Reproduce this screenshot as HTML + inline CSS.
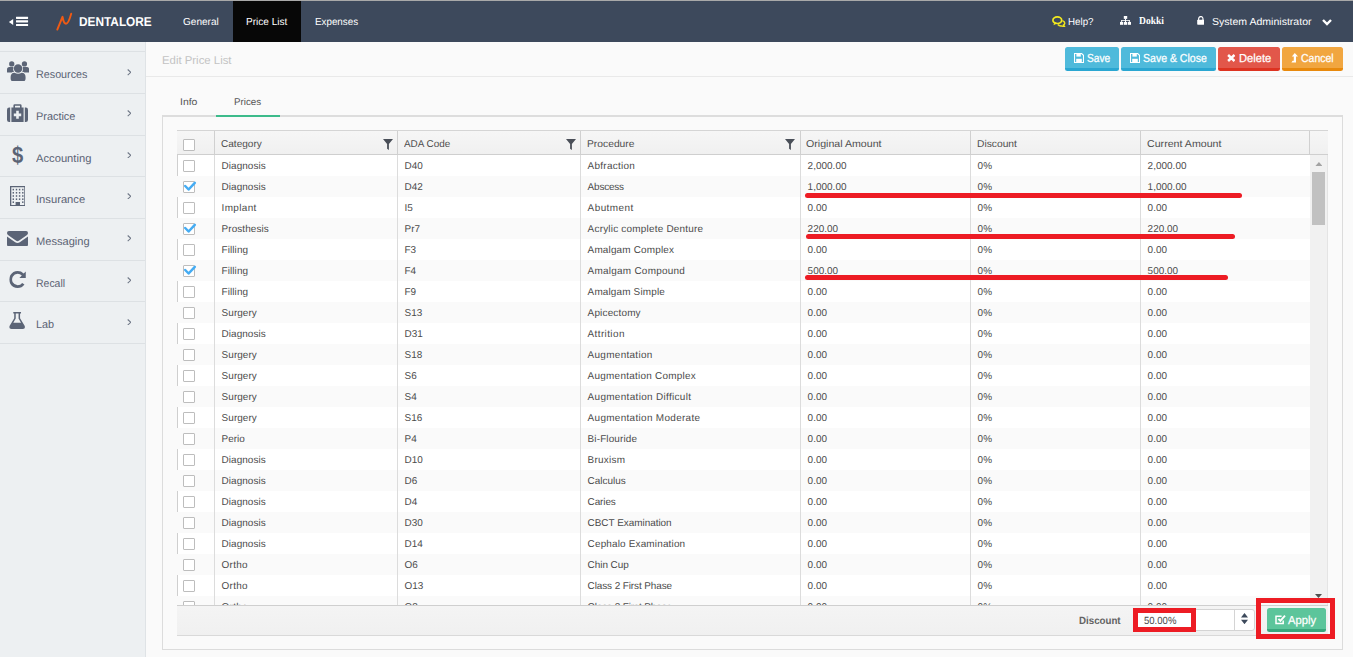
<!DOCTYPE html>
<html><head><meta charset="utf-8"><title>Edit Price List</title>
<style>
*{box-sizing:border-box;margin:0;padding:0}
html,body{width:1353px;height:657px;overflow:hidden;background:#fafafa;font-family:"Liberation Sans",sans-serif;color:#4f4f4f;text-rendering:geometricPrecision}
body{position:relative}
.abs{position:absolute}
.fx{position:absolute;white-space:nowrap;transform-origin:0 50%;display:block}
#topline{left:0;top:0;width:1353px;height:1px;background:#a9a9a9}
#nav{left:0;top:1px;width:1353px;height:41px;background:#3d495c}
#nav .fx{color:#fff;font-size:10.2px;top:15.1px;line-height:13px}
#nav .act{position:absolute;left:233px;top:0;width:68px;height:41px;background:#070707}
#side{left:0;top:42px;width:146px;height:615px;background:#edf0f2;border-right:1px solid #dfe3e6}
#side .sep{position:absolute;left:0;width:145px;height:1px;background:#dde1e4}
#side .fx{left:35.9px;font-size:11px;color:#5b6374;line-height:14px}
#side .chev{position:absolute;left:126.6px;width:4.6px;height:6.6px}
#side .ic{position:absolute;fill:#5b6476}
#titlebar{left:146px;top:42px;width:1207px;height:35px;background:#fafafa;border-bottom:1px solid #e9e9e9}
#title{left:162px;top:54.3px;font-size:11.4px;color:#c3c3c3;line-height:15px}
.btn{position:absolute;top:47px;height:23.7px;border-radius:2.5px;color:#fff;font-size:11.6px;line-height:21px;white-space:nowrap;-webkit-text-stroke:0.25px #fff}
.btn svg{position:absolute}
.btn .fx{top:0.6px}
.tab{font-size:9.7px;color:#555;line-height:13px;top:96.2px}
#panel{left:162px;top:115px;width:1181px;height:535px;border:1px solid #dcdcdc;border-top:2px solid #dddddd;background:#fafafa}
#tabline{left:216px;top:115px;width:64px;height:2px;background:#3dbb8b}
#ghead{left:177px;top:130px;width:1151px;height:25px;border-top:1px solid #d5d5d5;border-bottom:1px solid #cfcfcf;background:linear-gradient(#f6f6f6,#f0f0f0)}
#ghead .fx{top:7.3px;font-size:9.95px;color:#4f4f4f;line-height:13px}
#ghead .d{position:absolute;top:0;width:1px;height:23px;background:#d0d0d0}
#ghead .f{position:absolute;top:8px;width:10px;height:11px;fill:#4a4f58}
#gbody{left:177px;top:155px;width:1133px;height:450px;overflow:hidden;background:#fff}
.r{position:absolute;left:0;width:1133px;border-left:1px solid #cfcfcf;height:21px;font-size:9.95px;letter-spacing:0.2px;line-height:21px;color:#4b4b4b;background:#fff}
.r.alt{background:#fafafa;border-left-color:#fafafa}


.r span{position:absolute;top:1px;white-space:nowrap}
.c4,.c5,.c6{letter-spacing:0.03px}
.c2{letter-spacing:-0.05px}
.c1{left:43.6px}.c2{left:226.6px}.c3{left:409.6px}.c4{left:629.6px}.c5{left:799.6px}.c6{left:969.6px}
.cb{position:absolute;left:5px;top:5px;width:12px;height:12px;border:1px solid #bdbdbd;background:#fff;border-radius:1px}
.cb svg{position:absolute;left:-1px;top:-1px;width:14px;height:14px;overflow:visible}
.cb svg path{fill:none;stroke:#45acf3;stroke-width:2.5;stroke-linecap:round;stroke-linejoin:round}
.vl{position:absolute;top:155px;width:1px;height:450px;background:#dcdcdc}
#scroll{left:1310px;top:155px;width:18px;height:450px;background:#f1f1f1;border-right:1px solid #e4e4e4}
#thumb{left:1312px;top:172px;width:13px;height:53px;background:#c1c1c1}
#gfoot{left:177px;top:605px;width:1151px;height:31px;background:linear-gradient(#f4f4f4,#f0f0f0);border-top:1px solid #cfcfcf;border-bottom:1px solid #d9d9d9}
#dlabel{left:1079px;top:615px;font-size:10.4px;font-weight:bold;color:#626262;line-height:13px}
#dinput{left:1135px;top:609px;width:119.5px;height:22px;background:#fff;border:1px solid #d4d4d4;border-radius:3px}
#dinput .fx{left:8.3px;top:5px;font-size:10.4px;line-height:13px;color:#484848}
#dinput .sp{position:absolute;left:98px;top:0;width:1px;height:21px;background:#d4d4d4}
.red{position:absolute;background:#ed1c24;height:4.5px;border-radius:2.5px}
.rbox{position:absolute;border:5px solid #ed1c24}
#apply{left:1267px;top:608px;width:59px;height:23.8px;background:linear-gradient(#5cc59b 0,#5cc59b 20.9px,#39a67c 20.9px);border-radius:2.5px;color:#fff;font-size:11.6px;line-height:22px;-webkit-text-stroke:0.25px #fff}
</style></head><body>
<div id="topline" class="abs"></div>

<div id="nav" class="abs">
  <svg class="abs" style="left:8px;top:14px" width="21" height="13" viewBox="0 0 21 13"><path d="M0.9 6.9 L5.2 3.9 V9.9 Z" fill="#fff"/><rect x="8" y="1.7" width="12.1" height="2.2" rx="0.4" fill="#fff"/><rect x="8" y="5.2" width="12.1" height="2.2" rx="0.4" fill="#fff"/><rect x="8" y="8.9" width="12.1" height="2.2" rx="0.4" fill="#fff"/></svg>
  <svg class="abs" style="left:55px;top:11px" width="18" height="20" viewBox="0 0 18 20"><path d="M2.3 17.6 L7.5 4.8 C8.1 7.2 8.4 11.7 11 11.7 C13.5 11.7 14.9 6.4 16.2 1.8" fill="none" stroke="#ef5a14" stroke-width="1.95" stroke-linecap="round" stroke-linejoin="round"/></svg>
  <span id="brand" class="fx" style="left:79.3px;top:12.5px;font-size:12.9px;font-weight:bold;line-height:16px;transform:scaleX(0.918)">DENTALORE</span>
  <div class="act"></div>
  <span id="n1" class="fx" style="left:183.4px;transform:scaleX(0.985)">General</span>
  <span id="n2" class="fx" style="left:246.4px;transform:scaleX(0.986)">Price List</span>
  <span id="n3" class="fx" style="left:314.7px;transform:scaleX(0.963)">Expenses</span>
  <svg class="abs" style="left:1052px;top:15px" width="14" height="11.4" viewBox="0 0 14 11.4"><path d="M10.4 4.6 Q12.9 5.4 12.7 7.3 Q12.5 8.5 11.6 9 L12.6 10.8 L9.6 9.9 Q7.2 10.2 5.8 8.6" fill="none" stroke="#efe61c" stroke-width="1.5"/><ellipse cx="5.3" cy="4.2" rx="4.4" ry="3.3" fill="#3d495c" stroke="#f3ea1f" stroke-width="1.7"/><path d="M2.4 6.6 L1.4 9.2 L5.2 7.6Z" fill="#f3ea1f"/></svg>
  <span id="n4" class="fx" style="left:1068.2px;transform:scaleX(0.958)">Help?</span>
  <svg class="abs" style="left:1120px;top:15px" width="11" height="9" viewBox="0 0 11 10" preserveAspectRatio="none"><g fill="#fff"><rect x="3.8" y="0" width="3.4" height="3.2"/><rect x="0" y="6.6" width="3.2" height="3.2"/><rect x="3.9" y="6.6" width="3.2" height="3.2"/><rect x="7.8" y="6.6" width="3.2" height="3.2"/><rect x="5" y="3" width="1" height="4"/><rect x="1.2" y="4.6" width="8.6" height="0.9"/><rect x="1.2" y="4.6" width="0.9" height="2.2"/><rect x="8.9" y="4.6" width="0.9" height="2.2"/></g></svg>
  <span id="n5" class="fx" style="left:1139.1px;top:13.7px;font-family:'Liberation Serif',serif;font-weight:bold;font-size:10.6px;transform:scaleX(0.899)">Dokki</span>
  <svg class="abs" style="left:1196.8px;top:15px" width="7.6" height="9" viewBox="0 0 8 10"><path d="M1.6 4.4 V3 a2.4 2.4 0 0 1 4.8 0 V4.4" fill="none" stroke="#fff" stroke-width="1.3"/><rect x="0" y="4.2" width="8" height="5.4" rx="0.7" fill="#fff"/></svg>
  <span id="n6" class="fx" style="left:1212.3px;transform:scaleX(1.034)">System Administrator</span>
  <svg class="abs" style="left:1321.5px;top:17.5px" width="10" height="7" viewBox="0 0 10 7"><path d="M1 1 L5 5 L9 1" fill="none" stroke="#fff" stroke-width="2.4"/></svg>
</div>
<div id="side" class="abs">
<div class="sep" style="top:9px"></div>
<svg class="ic" style="left:6.7px;top:18.7px" width="22.2" height="20.6" viewBox="0 0 22 20"><circle cx="4.7" cy="2.7" r="2.6"/><circle cx="17.3" cy="2.7" r="2.6"/><circle cx="11" cy="7.2" r="4.2"/><path d="M0 10.6 V8.4 Q0 5.8 2.4 5.8 H6.4 Q5.6 8.6 7 10.4 Q5.2 10.6 4.6 11.2 H0.6 Q0 11.2 0 10.6Z"/><path d="M22 10.6 V8.4 Q22 5.8 19.6 5.8 H15.6 Q16.4 8.6 15 10.4 Q16.8 10.6 17.4 11.2 H21.4 Q22 11.2 22 10.6Z"/><path d="M3.6 17.4 V15.6 Q3.6 11.6 7.4 11.4 Q11 13.6 14.6 11.4 Q18.4 11.6 18.4 15.6 V17.4 Q18.4 20 15.8 20 H6.2 Q3.6 20 3.6 17.4Z"/></svg>
<span id="s0" class="fx" style="top:26px;transform:scaleX(0.978)">Resources</span>
<svg class="chev" style="top:27.3px" viewBox="0 0 4.6 6.6"><path d="M0.7 0.5 L3.8 3.3 L0.7 6.1" fill="none" stroke="#6f7787" stroke-width="1.05"/></svg>
<div class="sep" style="top:51px"></div>
<svg class="ic" style="left:7px;top:61.8px" width="21" height="18" viewBox="0 0 21 18"><path d="M0 5.8 Q0 3.6 2.2 3.6 H3.2 V18 H2.2 Q0 18 0 15.8Z"/><path d="M21 5.8 Q21 3.6 18.8 3.6 H17.8 V18 H18.8 Q21 18 21 15.8Z"/><path fill-rule="evenodd" d="M4.4 3.6 H6.4 V1.6 Q6.4 0.2 7.8 0.2 H13.2 Q14.6 0.2 14.6 1.6 V3.6 H16.6 V18 H4.4Z M8 1.8 V3.6 H13 V1.8Z M9.2 6.8 V9.4 H6.8 V12.2 H9.2 V14.8 H11.8 V12.2 H14.2 V9.4 H11.8 V6.8Z"/></svg>
<span id="s1" class="fx" style="top:68px;transform:scaleX(0.991)">Practice</span>
<svg class="chev" style="top:68.1px" viewBox="0 0 4.6 6.6"><path d="M0.7 0.5 L3.8 3.3 L0.7 6.1" fill="none" stroke="#6f7787" stroke-width="1.05"/></svg>
<div class="sep" style="top:93px"></div>
<div style="position:absolute;left:11.6px;top:100.6px;font-size:23.5px;line-height:24px;color:#5b6476;font-weight:bold;transform:scaleX(0.86);transform-origin:0 0">$</div>
<span id="s2" class="fx" style="top:110px;transform:scaleX(1.018)">Accounting</span>
<svg class="chev" style="top:109.8px" viewBox="0 0 4.6 6.6"><path d="M0.7 0.5 L3.8 3.3 L0.7 6.1" fill="none" stroke="#6f7787" stroke-width="1.05"/></svg>
<div class="sep" style="top:134px"></div>
<svg class="ic" style="left:9.6px;top:143.9px" width="15.6" height="20.2" viewBox="0 0 15.6 20.2"><path fill-rule="evenodd" d="M0 0 H15.6 V20.2 H0Z M1.3 1.3 V18.9 H5.6 V16 H10 V18.9 H14.3 V1.3Z"/><g><rect x="2.6" y="2.8" width="1.4" height="1.6"/><rect x="5.8" y="2.8" width="1.4" height="1.6"/><rect x="8.9" y="2.8" width="1.4" height="1.6"/><rect x="12.1" y="2.8" width="1.4" height="1.6"/><rect x="2.6" y="6.0" width="1.4" height="1.6"/><rect x="5.8" y="6.0" width="1.4" height="1.6"/><rect x="8.9" y="6.0" width="1.4" height="1.6"/><rect x="12.1" y="6.0" width="1.4" height="1.6"/><rect x="2.6" y="9.2" width="1.4" height="1.6"/><rect x="5.8" y="9.2" width="1.4" height="1.6"/><rect x="8.9" y="9.2" width="1.4" height="1.6"/><rect x="12.1" y="9.2" width="1.4" height="1.6"/><rect x="2.6" y="12.4" width="1.4" height="1.6"/><rect x="5.8" y="12.4" width="1.4" height="1.6"/><rect x="8.9" y="12.4" width="1.4" height="1.6"/><rect x="12.1" y="12.4" width="1.4" height="1.6"/><rect x="2.6" y="15.4" width="1.4" height="1.6"/><rect x="12.1" y="15.4" width="1.4" height="1.6"/></g></svg>
<span id="s3" class="fx" style="top:151px;transform:scaleX(1.018)">Insurance</span>
<svg class="chev" style="top:150.6px" viewBox="0 0 4.6 6.6"><path d="M0.7 0.5 L3.8 3.3 L0.7 6.1" fill="none" stroke="#6f7787" stroke-width="1.05"/></svg>
<div class="sep" style="top:176px"></div>
<svg class="ic" style="left:7.3px;top:188.9px" width="21" height="15.5" viewBox="0 0 22 16"><path d="M0 2 Q0 0 2 0 H20 Q22 0 22 2 Q22 3.4 20.6 4.4 L12.4 10 Q11 11 9.6 10 L1.4 4.4 Q0 3.4 0 2Z"/><path d="M0 5.6 L8.6 11.6 Q11 13.2 13.4 11.6 L22 5.6 V14 Q22 16 20 16 H2 Q0 16 0 14Z"/></svg>
<span id="s4" class="fx" style="top:193px;transform:scaleX(1.007)">Messaging</span>
<svg class="chev" style="top:193.2px" viewBox="0 0 4.6 6.6"><path d="M0.7 0.5 L3.8 3.3 L0.7 6.1" fill="none" stroke="#6f7787" stroke-width="1.05"/></svg>
<div class="sep" style="top:218px"></div>
<svg class="ic" style="left:9px;top:229.4px" width="17.3" height="17" viewBox="0 0 18 18"><path d="M17.6 0.6 V7.4 H10.8 L13.4 4.8 Q11.6 3 9 3 Q5.6 3 3.8 6 Q2.4 9 3.8 12 Q5.6 15 9 15 Q12 15 13.8 12.6 L16.2 14.2 Q13.6 18 9 18 Q4 18 1.2 13.4 Q-0.6 9 1.2 4.6 Q4 0 9 0 Q12.8 0 15.4 2.6Z"/></svg>
<span id="s5" class="fx" style="top:235px;transform:scaleX(0.952)">Recall</span>
<svg class="chev" style="top:235.0px" viewBox="0 0 4.6 6.6"><path d="M0.7 0.5 L3.8 3.3 L0.7 6.1" fill="none" stroke="#6f7787" stroke-width="1.05"/></svg>
<div class="sep" style="top:259px"></div>
<svg class="ic" style="left:9.2px;top:270.4px" width="16.3" height="17" viewBox="0 0 17 18"><path fill-rule="evenodd" d="M4.4 0 H12.6 V1.6 H11.6 V6.6 L16.4 14.6 Q17.6 18 14.6 18 H2.4 Q-0.6 18 0.6 14.6 L5.4 6.6 V1.6 H4.4Z M7 1.6 V7 L4.4 11.4 H12.6 L10 7 V1.6Z"/></svg>
<span id="s6" class="fx" style="top:276px;transform:scaleX(0.986)">Lab</span>
<svg class="chev" style="top:276.9px" viewBox="0 0 4.6 6.6"><path d="M0.7 0.5 L3.8 3.3 L0.7 6.1" fill="none" stroke="#6f7787" stroke-width="1.05"/></svg>
<div class="sep" style="top:301px"></div>

</div>
<div id="titlebar" class="abs"></div>
<span id="title" class="fx" style="transform:scaleX(0.998)">Edit Price List</span>
<div class="btn" style="left:1065px;width:54px;background:linear-gradient(#4fbadb 0,#4fbadb 21px,#2aa6d1 21px)"><svg style="left:8.9px;top:6px" width="10" height="10" viewBox="0 0 10 10"><path d="M0.5 0.5 H7.6 L9.5 2.4 V9.5 H0.5 Z" fill="none" stroke="#fff" stroke-width="1.1"/><rect x="2.4" y="0.8" width="4.4" height="2.8" fill="#fff"/><rect x="2.2" y="5.8" width="5.6" height="3.4" fill="#fff"/></svg><span id="b1" class="fx" style="left:21.6px;transform:scaleX(0.878)">Save</span></div>
<div class="btn" style="left:1121px;width:95px;background:linear-gradient(#4fbadb 0,#4fbadb 21px,#2aa6d1 21px)"><svg style="left:8.9px;top:6px" width="10" height="10" viewBox="0 0 10 10"><path d="M0.5 0.5 H7.6 L9.5 2.4 V9.5 H0.5 Z" fill="none" stroke="#fff" stroke-width="1.1"/><rect x="2.4" y="0.8" width="4.4" height="2.8" fill="#fff"/><rect x="2.2" y="5.8" width="5.6" height="3.4" fill="#fff"/></svg><span id="b2" class="fx" style="left:21.7px;transform:scaleX(0.908)">Save &amp; Close</span></div>
<div class="btn" style="left:1218px;width:62px;background:linear-gradient(#e2574a 0,#e2574a 20.8px,#dd3321 20.8px)"><svg style="left:8.6px;top:7.2px" width="8.6" height="8" viewBox="0 0 8.6 8"><path d="M1.1 1 L7.5 7 M7.5 1 L1.1 7" stroke="#fff" stroke-width="2.5" fill="none"/></svg><span id="b3" class="fx" style="left:20.5px;transform:scaleX(0.961)">Delete</span></div>
<div class="btn" style="left:1282px;width:61px;background:linear-gradient(#f1a640 0,#f1a640 20.8px,#e8890c 20.8px)"><svg style="left:9px;top:5.5px" width="7" height="10" viewBox="0 0 7 10"><path d="M3.8 0 L7 3.6 H5 V9.4 H0.4 L1.6 7.8 H2.8 V3.6 H0.8 Z" fill="#fff"/></svg><span id="b4" class="fx" style="left:18.7px;transform:scaleX(0.903)">Cancel</span></div>
<span id="t1" class="fx tab" style="left:180.2px;transform:scaleX(1.076)">Info</span>
<span id="t2" class="fx tab" style="left:234.1px;transform:scaleX(1.010)">Prices</span>
<div id="panel" class="abs"></div>
<div id="tabline" class="abs"></div>
<div id="ghead" class="abs">
  <i class="cb" style="left:6px;top:8px;width:12px;height:12px"></i>
  <div class="d" style="left:37px"></div><span id="h1" class="fx" style="left:44.2px;transform:scaleX(1.012)">Category</span>
  <svg class="f" style="left:206px" viewBox="0 0 10 11"><path d="M0 0 H10 L5.9 4.9 V11 L4.1 9.7 V4.9 Z"/></svg>
  <div class="d" style="left:220px"></div><span id="h2" class="fx" style="left:227.3px;transform:scaleX(0.998)">ADA Code</span>
  <svg class="f" style="left:389px" viewBox="0 0 10 11"><path d="M0 0 H10 L5.9 4.9 V11 L4.1 9.7 V4.9 Z"/></svg>
  <div class="d" style="left:403px"></div><span id="h3" class="fx" style="left:410.2px;transform:scaleX(1.036)">Procedure</span>
  <svg class="f" style="left:608px" viewBox="0 0 10 11"><path d="M0 0 H10 L5.9 4.9 V11 L4.1 9.7 V4.9 Z"/></svg>
  <div class="d" style="left:623px"></div><span id="h4" class="fx" style="left:629.3px;transform:scaleX(1.068)">Original Amount</span>
  <div class="d" style="left:793px"></div><span id="h5" class="fx" style="left:799.6px;transform:scaleX(1.032)">Discount</span>
  <div class="d" style="left:963px"></div><span id="h6" class="fx" style="left:969.6px;transform:scaleX(1.070)">Current Amount</span>
  <div class="d" style="left:1132px"></div>
</div>
<div id="gbody" class="abs">
<div class="r" style="top:0px"><i class="cb"></i><span class="c1" style="letter-spacing:0.06px">Diagnosis</span><span class="c2">D40</span><span class="c3" style="letter-spacing:0.28px">Abfraction</span><span class="c4">2,000.00</span><span class="c5">0%</span><span class="c6">2,000.00</span></div>
<div class="r alt" style="top:21px"><i class="cb on"><svg viewBox="0 0 14 14"><path d="M2.2 5 L5.6 8.5 L11.8 1.9" /></svg></i><span class="c1" style="letter-spacing:0.06px">Diagnosis</span><span class="c2">D42</span><span class="c3" style="letter-spacing:-0.18px">Abscess</span><span class="c4">1,000.00</span><span class="c5">0%</span><span class="c6">1,000.00</span></div>
<div class="r" style="top:42px"><i class="cb"></i><span class="c1" style="letter-spacing:0.36px">Implant</span><span class="c2">I5</span><span class="c3" style="letter-spacing:0.44px">Abutment</span><span class="c4">0.00</span><span class="c5">0%</span><span class="c6">0.00</span></div>
<div class="r alt" style="top:63px"><i class="cb on"><svg viewBox="0 0 14 14"><path d="M2.2 5 L5.6 8.5 L11.8 1.9" /></svg></i><span class="c1" style="letter-spacing:0.08px">Prosthesis</span><span class="c2">Pr7</span><span class="c3" style="letter-spacing:0.22px">Acrylic complete Denture</span><span class="c4">220.00</span><span class="c5">0%</span><span class="c6">220.00</span></div>
<div class="r" style="top:84px"><i class="cb"></i><span class="c1" style="letter-spacing:0.08px">Filling</span><span class="c2">F3</span><span class="c3" style="letter-spacing:0.17px">Amalgam Complex</span><span class="c4">0.00</span><span class="c5">0%</span><span class="c6">0.00</span></div>
<div class="r alt" style="top:105px"><i class="cb on"><svg viewBox="0 0 14 14"><path d="M2.2 5 L5.6 8.5 L11.8 1.9" /></svg></i><span class="c1" style="letter-spacing:0.08px">Filling</span><span class="c2">F4</span><span class="c3" style="letter-spacing:0.26px">Amalgam Compound</span><span class="c4">500.00</span><span class="c5">0%</span><span class="c6">500.00</span></div>
<div class="r" style="top:126px"><i class="cb"></i><span class="c1" style="letter-spacing:0.08px">Filling</span><span class="c2">F9</span><span class="c3" style="letter-spacing:0.16px">Amalgam Simple</span><span class="c4">0.00</span><span class="c5">0%</span><span class="c6">0.00</span></div>
<div class="r alt" style="top:147px"><i class="cb"></i><span class="c1" style="letter-spacing:0.07px">Surgery</span><span class="c2">S13</span><span class="c3" style="letter-spacing:0.18px">Apicectomy</span><span class="c4">0.00</span><span class="c5">0%</span><span class="c6">0.00</span></div>
<div class="r" style="top:168px"><i class="cb"></i><span class="c1" style="letter-spacing:0.06px">Diagnosis</span><span class="c2">D31</span><span class="c3" style="letter-spacing:0.39px">Attrition</span><span class="c4">0.00</span><span class="c5">0%</span><span class="c6">0.00</span></div>
<div class="r alt" style="top:189px"><i class="cb"></i><span class="c1" style="letter-spacing:0.07px">Surgery</span><span class="c2">S18</span><span class="c3" style="letter-spacing:0.31px">Augmentation</span><span class="c4">0.00</span><span class="c5">0%</span><span class="c6">0.00</span></div>
<div class="r" style="top:210px"><i class="cb"></i><span class="c1" style="letter-spacing:0.07px">Surgery</span><span class="c2">S6</span><span class="c3" style="letter-spacing:0.26px">Augmentation Complex</span><span class="c4">0.00</span><span class="c5">0%</span><span class="c6">0.00</span></div>
<div class="r alt" style="top:231px"><i class="cb"></i><span class="c1" style="letter-spacing:0.07px">Surgery</span><span class="c2">S4</span><span class="c3" style="letter-spacing:0.33px">Augmentation Difficult</span><span class="c4">0.00</span><span class="c5">0%</span><span class="c6">0.00</span></div>
<div class="r" style="top:252px"><i class="cb"></i><span class="c1" style="letter-spacing:0.07px">Surgery</span><span class="c2">S16</span><span class="c3" style="letter-spacing:0.32px">Augmentation Moderate</span><span class="c4">0.00</span><span class="c5">0%</span><span class="c6">0.00</span></div>
<div class="r alt" style="top:273px"><i class="cb"></i><span class="c1" style="letter-spacing:-0.02px">Perio</span><span class="c2">P4</span><span class="c3" style="letter-spacing:0.13px">Bi-Flouride</span><span class="c4">0.00</span><span class="c5">0%</span><span class="c6">0.00</span></div>
<div class="r" style="top:294px"><i class="cb"></i><span class="c1" style="letter-spacing:0.06px">Diagnosis</span><span class="c2">D10</span><span class="c3" style="letter-spacing:0.26px">Bruxism</span><span class="c4">0.00</span><span class="c5">0%</span><span class="c6">0.00</span></div>
<div class="r alt" style="top:315px"><i class="cb"></i><span class="c1" style="letter-spacing:0.06px">Diagnosis</span><span class="c2">D6</span><span class="c3" style="letter-spacing:-0.00px">Calculus</span><span class="c4">0.00</span><span class="c5">0%</span><span class="c6">0.00</span></div>
<div class="r" style="top:336px"><i class="cb"></i><span class="c1" style="letter-spacing:0.06px">Diagnosis</span><span class="c2">D4</span><span class="c3" style="letter-spacing:-0.10px">Caries</span><span class="c4">0.00</span><span class="c5">0%</span><span class="c6">0.00</span></div>
<div class="r alt" style="top:357px"><i class="cb"></i><span class="c1" style="letter-spacing:0.06px">Diagnosis</span><span class="c2">D30</span><span class="c3" style="letter-spacing:-0.02px">CBCT Examination</span><span class="c4">0.00</span><span class="c5">0%</span><span class="c6">0.00</span></div>
<div class="r" style="top:378px"><i class="cb"></i><span class="c1" style="letter-spacing:0.06px">Diagnosis</span><span class="c2">D14</span><span class="c3" style="letter-spacing:0.17px">Cephalo Examination</span><span class="c4">0.00</span><span class="c5">0%</span><span class="c6">0.00</span></div>
<div class="r alt" style="top:399px"><i class="cb"></i><span class="c1" style="letter-spacing:0.29px">Ortho</span><span class="c2">O6</span><span class="c3" style="letter-spacing:-0.04px">Chin Cup</span><span class="c4">0.00</span><span class="c5">0%</span><span class="c6">0.00</span></div>
<div class="r" style="top:420px"><i class="cb"></i><span class="c1" style="letter-spacing:0.29px">Ortho</span><span class="c2">O13</span><span class="c3" style="letter-spacing:-0.09px">Class 2 First Phase</span><span class="c4">0.00</span><span class="c5">0%</span><span class="c6">0.00</span></div>
<div class="r alt" style="top:441px"><i class="cb"></i><span class="c1" style="letter-spacing:0.29px">Ortho</span><span class="c2">O8</span><span class="c3" style="letter-spacing:-0.09px">Class 2 First Phase</span><span class="c4">0.00</span><span class="c5">0%</span><span class="c6">0.00</span></div>
</div>
<div class="vl" style="left:214px"></div><div class="vl" style="left:397px"></div><div class="vl" style="left:580px"></div><div class="vl" style="left:800px"></div><div class="vl" style="left:970px"></div><div class="vl" style="left:1140px"></div>
<div id="scroll" class="abs"></div>
<div id="thumb" class="abs"></div>
<svg class="abs" style="left:1314.6px;top:161.5px" width="7.8" height="4.5" viewBox="0 0 9 5" preserveAspectRatio="none"><path d="M0 5 L4.5 0 L9 5Z" fill="#a3a3a3"/></svg>
<svg class="abs" style="left:1315.2px;top:593.5px" width="7" height="4" viewBox="0 0 9 5"><path d="M0 0 L4.5 5 L9 0Z" fill="#505050"/></svg>
<div id="gfoot" class="abs"></div>
<span id="dlabel" class="fx" style="transform:scaleX(0.936)">Discount</span>
<div id="dinput" class="abs"><span id="dval" class="fx" style="transform:scaleX(0.919)">50.00%</span><div class="sp"></div>
<svg class="abs" style="left:105px;top:3px" width="7" height="11.2" viewBox="0 0 7 13" preserveAspectRatio="none"><path d="M0 5.2 L3.5 0 L7 5.2Z M0 7.8 L3.5 13 L7 7.8Z" fill="#3d4a5c"/></svg></div>
<div id="apply" class="abs"><svg class="abs" style="left:8px;top:5.5px" width="11" height="11" viewBox="0 0 11 11"><path d="M8.2 6.4 V9.4 H1 V2.2 H6.6" fill="none" stroke="#fff" stroke-width="1.5"/><path d="M3.4 4.8 L5.4 6.8 L10 1.6" fill="none" stroke="#fff" stroke-width="1.9"/></svg><span id="ap" class="fx" style="left:20.9px;top:2.2px;transform:scaleX(0.965)">Apply</span></div>
<div class="red" style="left:805px;top:193.3px;width:437px"></div>
<div class="red" style="left:806px;top:234px;width:429px;height:4.7px"></div>
<div class="red" style="left:805px;top:275.1px;width:423px;height:4.7px"></div>
<div class="rbox" style="left:1133px;top:608px;width:63px;height:24px"></div>
<div class="rbox" style="left:1256px;top:598px;width:79px;height:40.8px;border-width:5px"></div>
</body></html>
